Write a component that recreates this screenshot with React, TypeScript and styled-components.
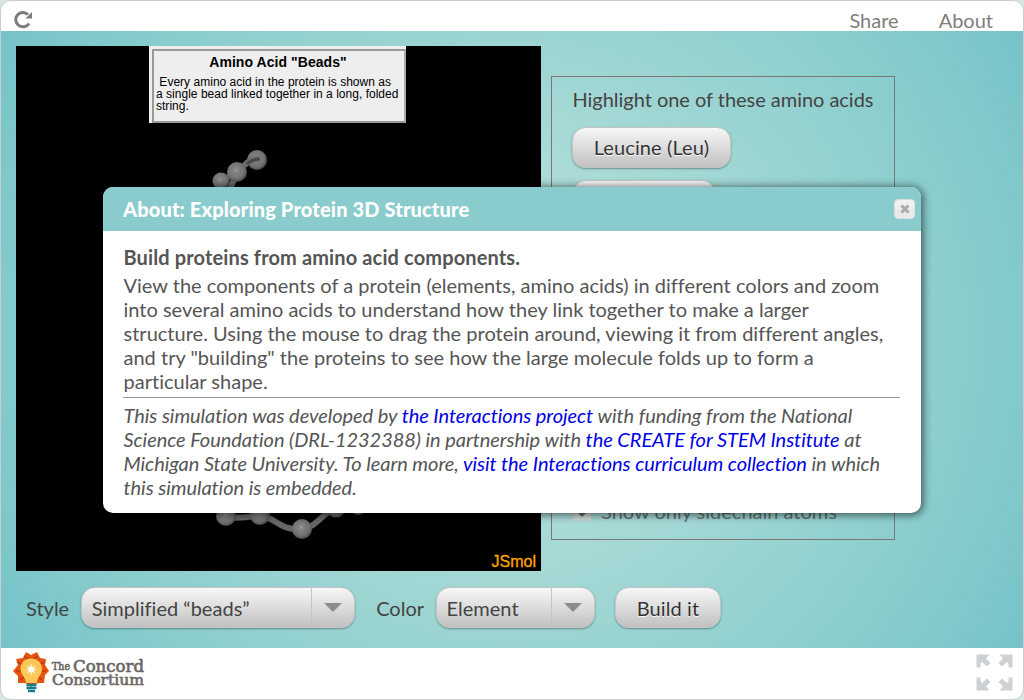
import React from 'react';
import styled, { createGlobalStyle } from 'styled-components';

const GlobalStyle = createGlobalStyle`
  *, *::before, *::after { box-sizing: border-box; }
  body { margin: 0; background: #d5e6e5; font-family: Lato, "Liberation Sans", sans-serif; font-size: 20px; color: #444; overflow: hidden; }
`;

const Frame = styled.div`
  position: relative;
  display: flex;
  flex-direction: column;
  width: 1024px;
  height: 700px;
  border: 1px solid #ccc;
  border-radius: 11px;
  background: #fff;
  overflow: hidden;
`;

const TopBar = styled.header`
  display: flex;
  align-items: flex-start;
  justify-content: space-between;
  height: 30px;
  padding: 7px 30px 0 13px;
`;

const TopLinks = styled.nav`
  display: flex;
  gap: 40px;
`;

const TopLink = styled.a`
  color: #7e7e7e;
  line-height: 24px;
`;

const Stage = styled.main`
  display: flex;
  flex-direction: column;
  height: 617px;
  padding: 15px 15px 0;
  background: radial-gradient(circle farthest-corner at 50% 50%, #bfe4dd 0%, #8acdcd 75%, #75c3c8 100%);
`;

const Workspace = styled.div`
  display: flex;
  gap: 10px;
`;

const Viewer = styled.section`
  position: relative;
  width: 525px;
  height: 525px;
  background: #000;
`;

const Protein = styled.svg`
  display: block;
`;

const Notice = styled.div`
  position: absolute;
  left: 133px;
  top: 0;
  width: 257px;
  height: 77px;
  padding: 3px 0 0 3px;
  background: #eee;
  color: #000;
  font-family: "Liberation Sans", Arial, sans-serif;
`;

const NoticeInner = styled.div`
  height: 74px;
  padding: 3px 2px;
  border: 2px solid #999;
  border-right-color: #aaa;
  border-bottom-color: #999;
`;

const NoticeTitle = styled.div`
  padding-right: 2px;
  font-size: 14px;
  font-weight: bold;
  line-height: 16px;
  letter-spacing: 0.06px;
  text-align: center;
`;

const NoticeText = styled.div`
  margin-top: 6px;
  font-size: 12px;
  line-height: 12px;
  letter-spacing: 0.02px;
  white-space: pre;
`;

const Brand = styled.div`
  position: absolute;
  right: 5px;
  bottom: 0;
  color: #ffa500;
  font: 16px/19px "Liberation Sans", Arial, sans-serif;
  -webkit-text-stroke: 0.3px #ffa500;
`;

const SidePanel = styled.section`
  display: flex;
  flex-direction: column;
  align-items: flex-start;
  width: 344px;
  height: 464px;
  margin-top: 30px;
  padding: 10px 20px 16px;
  border: 1px solid #7b7777;
`;

const PanelTitle = styled.div`
  line-height: 24px;
  margin: 0 0 16px 0.5px;
  letter-spacing: -0.03px;
  white-space: nowrap;
`;

const Button = styled.button<{ $width: number; $lift?: number }>`
  width: ${p => p.$width}px;
  height: 41px;
  padding: 0 0 ${p => p.$lift ?? 2}px;
  border: 1px solid #c4c6c6;
  border-radius: 14px;
  background: linear-gradient(#f7f7f7, #c1c1c1);
  box-shadow: 0 1px 2px rgba(0, 0, 0, 0.35);
  color: #333;
  font: 20px Lato, sans-serif;
  letter-spacing: 0.1px;
  text-shadow: 0 1px 1px #fff;
  & + & { margin-top: 12px; }
`;

const CheckRow = styled.label`
  display: flex;
  align-items: center;
  gap: 9px;
  margin-top: auto;
  line-height: 24px;
  opacity: 0.7;
`;

const CheckBox = styled.span`
  display: grid;
  place-items: center;
  width: 20px;
  height: 20px;
  border: 1px solid #ccc;
  background: #ddd;
`;

const Controls = styled.div`
  display: flex;
  align-items: center;
  margin: 16px 0 0 10px;
`;

const Field = styled.label<{ $after: number }>`
  display: flex;
  align-items: center;
  gap: 12px;
  margin-right: ${p => p.$after}px;
`;

const Select = styled.div<{ $width: number }>`
  display: flex;
  width: ${p => p.$width}px;
  height: 41px;
  border: 1px solid #c4c6c6;
  border-radius: 14px;
  background: linear-gradient(#f7f7f7, #c1c1c1);
  box-shadow: 0 1px 2px rgba(0, 0, 0, 0.35);
`;

const SelectValue = styled.span`
  flex: 1;
  padding-left: 9.5px;
  line-height: 41px;
  letter-spacing: 0.02px;
  font-variant-ligatures: common-ligatures;
  white-space: nowrap;
`;

const SelectArrow = styled.span`
  display: grid;
  place-items: center;
  width: 43px;
  border-left: 1px solid #c4c4c4;
  &::after {
    content: "";
    border: 9px solid transparent;
    border-top-color: #8a8c8c;
    border-bottom: 0;
  }
`;

const Footer = styled.footer`
  display: flex;
  justify-content: space-between;
  flex: 1;
  padding: 3px 10px 0 11px;
`;

const Modal = styled.div`
  position: absolute;
  left: 102px;
  top: 186px;
  width: 818px;
  height: 326px;
  border-radius: 10px;
  background: #fff;
  box-shadow: 1px 1px 8px 1px rgba(0, 0, 0, 0.6);
  overflow: hidden;
`;

const ModalHeader = styled.div`
  display: flex;
  align-items: center;
  justify-content: space-between;
  height: 44px;
  padding: 0 6px 0 20px;
  background: #8acbcd;
  color: #fff;
`;

const ModalTitle = styled.h1`
  margin: 0;
  font-size: 20px;
  font-weight: 900;
  line-height: 24px;
  letter-spacing: 0.14px;
`;

const CloseButton = styled.button`
  display: grid;
  place-items: center;
  width: 21px;
  height: 20px;
  padding: 0;
  border: 1px solid #dfdfdf;
  border-radius: 4px;
  background: linear-gradient(#f0f0f0 50%, #e9e9e9 50%);
`;

const ModalBody = styled.div`
  padding: 14px 20px;
  color: #555;
  line-height: 24px;
  white-space: nowrap;
`;

const Lead = styled.div`
  margin-bottom: 4px;
  padding-left: 0.5px;
  font-weight: 700;
  letter-spacing: 0.13px;
`;

const Paragraph = styled.p`
  margin: 0;
  padding-left: 0.5px;
  letter-spacing: 0.01px;
`;

const Rule = styled.hr`
  width: 777px;
  height: 1px;
  margin: 4px 0 5px;
  border: 0;
  background: #999;
`;

const Credit = styled(Paragraph)`
  font-style: italic;
  letter-spacing: -0.05px;
`;

const Link = styled.a`
  color: #0000e5;
`;

const beads: [number, number, number][] = [
  [205, 135, 8.5], [241, 114, 10], [221, 126, 10],
  [210, 470, 10], [244, 469, 10], [320, 462, 9.5], [342, 460, 9], [286, 483, 10],
];

const Molecule = () => (
  <Protein width="525" height="525" viewBox="0 0 525 525">
    <defs>
      <radialGradient id="bead" cx="45%" cy="42%" r="60%">
        <stop offset="0" stopColor="#a0a0a0" />
        <stop offset="0.15" stopColor="#858585" />
        <stop offset="0.7" stopColor="#707070" />
        <stop offset="1" stopColor="#454545" />
      </radialGradient>
    </defs>
    <g fill="none" stroke="#666" strokeWidth="6">
      <path d="M205 135L221 126M221 126Q218 134 213 145M210 471Q225 473 244 469M244 469C260 472 264 485 286 483M286 483C302 481 306 466 320 462" />
    </g>
    {beads.map(([x, y, r]) => <circle key={`${x}-${y}`} cx={x} cy={y} r={r} fill="url(#bead)" />)}
    <path d="M228 120Q234 112 243 113" fill="none" stroke="#6c6c6c" strokeWidth="6" />
    <path d="M231 118Q236 113 244 113" fill="none" stroke="#484848" strokeWidth="3" />
  </Protein>
);

const ReloadIcon = () => (
  <svg width="21" height="22" viewBox="0 0 21 22">
    <path d="M15 15.500A7.200 7.200 0 1 1 14 6.500" fill="none" stroke="#7b7b7b" strokeWidth="3" />
    <path d="M18 4V10.500H11.500Z" fill="#7b7b7b" />
  </svg>
);

const Logo = () => (
  <svg width="136" height="44" viewBox="0 0 136 44">
    <path d="M14 1L19 4L25 1L28 7L34 8L33 14L37 20L33 24L32 32L26 32L19 36L13 32L6 32L6 25L1 20L6 14L4 8L11 7Z" fill="#e65510" />
    <path d="M12 5L19 10L26 5M5 11L12 14M33 11L26 14M4 20L11 20M34 20L27 20M8 29L14 24M30 29L24 24" stroke="#ba3c0c" strokeWidth="1.4" fill="none" />
    <path d="M19 7.500C12.500 7.500 8.500 12 8.500 18C8.500 24 14 26 14 32H25C25 26 30 24 30 18C30 12 25.500 7.500 19 7.500Z" fill="#ffc65a" />
    <path d="M19.300 13V24M14 18.500H24.600M15.500 15L23 22M23 15L15.500 22" stroke="#fff3c8" strokeWidth="1.200" />
    <circle cx="19.300" cy="18.500" r="3" fill="#fff" />
    <path d="M14.500 34H24.500M14.500 37H24.500M16 40H23" stroke="#168091" strokeWidth="2.400" />
    <g fill="#6c6765" stroke="#6c6765" strokeWidth="0.650" fontFamily="DejaVu Serif, serif">
      <text x="40" y="19" fontSize="11" textLength="18" lengthAdjust="spacingAndGlyphs">The</text>
      <text x="61" y="20.500" fontSize="16" textLength="71" lengthAdjust="spacingAndGlyphs">Concord</text>
      <text x="40" y="33.500" fontSize="15.500" textLength="92" lengthAdjust="spacingAndGlyphs">Consortium</text>
    </g>
  </svg>
);

const ExpandIcon = () => (
  <svg width="38" height="44" viewBox="0 -3 38 44" fill="#ced1d3">
    {[[1, 1], [-1, 1], [1, -1], [-1, -1]].map(([sx, sy]) => (
      <path key={`${sx}${sy}`} transform={`translate(19.500 18.500) scale(${sx} ${sy}) translate(-19 -19)`} d="M1 1H14L10.500 5L15 9.500L11.500 13L6.500 8.500L5 10V14H1Z" />
    ))}
  </svg>
);

export default function App() {
  return (
    <>
      <GlobalStyle />
      <Frame>
        <TopBar>
          <ReloadIcon />
          <TopLinks>
            <TopLink>Share</TopLink>
            <TopLink>About</TopLink>
          </TopLinks>
        </TopBar>
        <Stage>
          <Workspace>
            <Viewer>
              <Molecule />
              <Notice>
                <NoticeInner>
                  <NoticeTitle>Amino Acid "Beads"</NoticeTitle>
                  <NoticeText>{' Every amino acid in the protein is shown as\na single bead linked together in a long, folded\nstring.'}</NoticeText>
                </NoticeInner>
              </Notice>
              <Brand>JSmol</Brand>
            </Viewer>
            <SidePanel>
              <PanelTitle>Highlight one of these amino acids</PanelTitle>
              <Button $width={159}>Leucine (Leu)</Button>
              <Button $width={144} aria-label="Amino acid" />
              <CheckRow>
                <CheckBox>
                  <svg width="12" height="12" viewBox="0 0 12 12"><path d="M0 6H12L6 12Z" fill="#444" /></svg>
                </CheckBox>
                Show only sidechain atoms
              </CheckRow>
            </SidePanel>
          </Workspace>
          <Controls>
            <Field $after={21}>
              Style
              <Select $width={274}><SelectValue>Simplified “beads”</SelectValue><SelectArrow /></Select>
            </Field>
            <Field $after={20}>
              Color
              <Select $width={159}><SelectValue>Element</SelectValue><SelectArrow /></Select>
            </Field>
            <Button $width={106} $lift={0}>Build it</Button>
          </Controls>
        </Stage>
        <Footer>
          <Logo />
          <ExpandIcon />
        </Footer>
        <Modal>
          <ModalHeader>
            <ModalTitle>About: Exploring Protein 3D Structure</ModalTitle>
            <CloseButton aria-label="Close">
              <svg width="10" height="10" viewBox="0 0 10 10"><path d="M1.500 1.500L8.500 8.500M8.500 1.500L1.500 8.500" stroke="#aaa" strokeWidth="3" /></svg>
            </CloseButton>
          </ModalHeader>
          <ModalBody>
            <Lead>Build proteins from amino acid components.</Lead>
            <Paragraph>
              View the components of a protein (elements, amino acids) in different colors and zoom<br />
              into several amino acids to understand how they link together to make a larger<br />
              structure. Using the mouse to drag the protein around, viewing it from different angles,<br />
              and try "building" the proteins to see how the large molecule folds up to form a<br />
              particular shape.
            </Paragraph>
            <Rule />
            <Credit>
              This simulation was developed by <Link>the Interactions project</Link> with funding from the National<br />
              Science Foundation (DRL-1232388) in partnership with <Link>the CREATE for STEM Institute</Link> at<br />
              Michigan State University. To learn more, <Link>visit the Interactions curriculum collection</Link> in which<br />
              this simulation is embedded.
            </Credit>
          </ModalBody>
        </Modal>
      </Frame>
    </>
  );
}
